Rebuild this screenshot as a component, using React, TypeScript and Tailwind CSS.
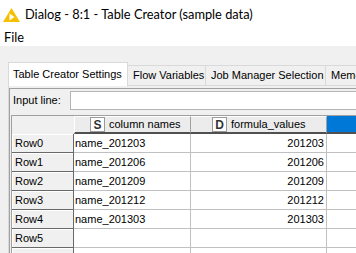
const rows = [
  ["Row0", "name_201203", "201203"],
  ["Row1", "name_201206", "201206"],
  ["Row2", "name_201209", "201209"],
  ["Row3", "name_201212", "201212"],
  ["Row4", "name_201303", "201303"],
  ["Row5", "", ""],
  ["", "", ""],
];

function TypeBox({ letter }: { letter: string }) {
  return (
    <span className="flex h-[15px] w-[15px] items-center justify-center border border-[#9a9a9a] bg-white text-[12px] font-bold leading-none text-[#333]">
      {letter}
    </span>
  );
}

export default function App() {
  return (
    <div className="relative h-[253px] w-[356px] overflow-hidden bg-[#f0f0f0] text-black">
      {/* title bar */}
      <div className="flex h-[30px] items-center bg-white pl-[3px] font-['Lato',sans-serif] text-[12.8px]">
        <svg width="17" height="14" viewBox="0 0 17 14" className="mr-[5px]">
          <polygon points="8.5,0 17,14 0,14" fill="#f5c000" />
          <polygon points="6.5,5.5 11.5,9 6.5,12.5" fill="#fff" />
        </svg>
        <span className="whitespace-nowrap">Dialog - 8:1 - Table Creator (sample data)</span>
      </div>

      {/* menu */}
      <div className="flex h-[16px] items-center bg-white pl-[4px] font-['Lato',sans-serif] text-[12.8px]">
        File
      </div>

      {/* tabs */}
      <div className="mt-[16px] flex items-end whitespace-nowrap pl-[8px] font-['Liberation_Sans',sans-serif] text-[11px]">
        <div className="relative z-10 -mb-px flex h-[24px] w-[120px] shrink-0 items-center border border-b-0 border-[#d9d9d9] bg-white pl-[4px]">
          Table Creator Settings
        </div>
        <div className="flex h-[20px] w-[78px] shrink-0 items-center border border-b-0 border-l-0 border-[#d9d9d9] pl-[5px]">
          Flow Variables
        </div>
        <div className="flex h-[20px] w-[120px] shrink-0 items-center border border-b-0 border-l-0 border-[#d9d9d9] pl-[5px]">
          Job Manager Selection
        </div>
        <div className="flex h-[20px] flex-1 items-center overflow-hidden border border-b-0 border-l-0 border-r-0 border-[#d9d9d9] pl-[5px]">
          Memory Policy
        </div>
      </div>

      {/* panel */}
      <div className="ml-[8px] border-l border-t border-[#d9d9d9] font-['Liberation_Sans',sans-serif] text-[11px]">
        <div className="mt-[2px] border-l border-t border-[#a0a0a0] pl-[1px]">
          <div className="flex h-[24px] items-start pl-[2px] pt-[2px]">
            <span className="flex h-[19px] w-[57px] shrink-0 items-center">Input line:</span>
            <div className="h-[19px] flex-1 border border-r-0 border-[#b4b4b4] bg-white" />
          </div>

          <div className="mt-[2px] border-l border-t border-[#a0a0a0]">
            {/* header */}
            <div className="flex h-[18px]">
              <div className="w-[62px] shrink-0" />
              <div className="flex w-[117px] shrink-0 items-center gap-[4px] border-b-2 border-l border-r border-t border-b-[#505050] border-l-white border-r-[#a0a0a0] border-t-white bg-[#ececec] pl-[15px]">
                <TypeBox letter="S" />
                <span>column names</span>
              </div>
              <div className="flex w-[136px] shrink-0 items-center gap-[4px] border-b-2 border-r border-t border-b-[#505050] border-r-[#a0a0a0] border-t-white bg-[#ececec] pl-[21px]">
                <TypeBox letter="D" />
                <span>formula_values</span>
              </div>
              <div className="flex-1 border-b-2 border-b-[#505050] bg-[#0078d7]" />
            </div>

            {/* rows */}
            {rows.map((r, i) => (
              <div key={i} className="flex h-[19px]">
                <div className="flex w-[62px] shrink-0 items-center border-b border-r border-b-[#696969] border-r-[#696969] bg-[#f0f0f0] pl-[3px] shadow-[inset_1px_1px_0_#ffffff]">
                  {r[0]}
                </div>
                <div className="flex w-[117px] shrink-0 items-center border-b border-r border-[#c0c0c0] bg-white pl-[1px]">
                  {r[1]}
                </div>
                <div className="flex w-[136px] shrink-0 items-center justify-end border-b border-r border-[#c0c0c0] bg-white pr-[2px]">
                  {r[2]}
                </div>
                <div className="flex-1 border-b border-[#c0c0c0] bg-white" />
              </div>
            ))}
          </div>
        </div>
      </div>
    </div>
  );
}
